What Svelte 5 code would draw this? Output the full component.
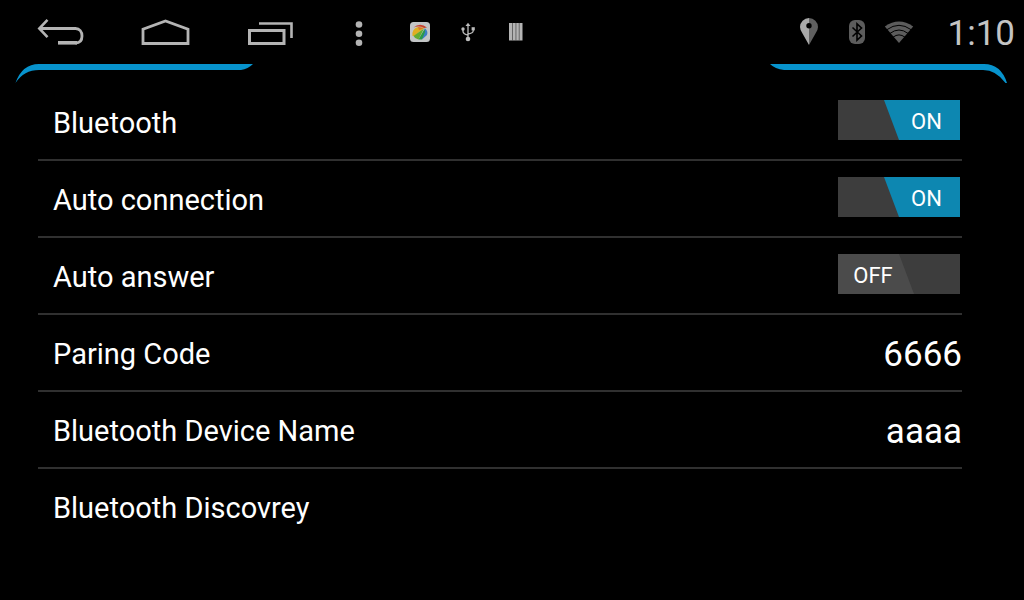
<script>
  let switches = $state([
    { id: 'bluetooth', label: 'Bluetooth', on: true },
    { id: 'auto-connection', label: 'Auto connection', on: true },
    { id: 'auto-answer', label: 'Auto answer', on: false }
  ]);
  let fields = $state([
    { id: 'code', label: 'Paring Code', value: '6666' },
    { id: 'device', label: 'Bluetooth Device Name', value: 'aaaa' }
  ]);
</script>

<div class="screen">
  <header>
    <nav>
      <button class="key" aria-label="Back">
        <svg width="50" height="32" viewBox="0 0 50 32" fill="none" stroke="#b4b4b4">
          <path d="M11.500 3.800 3.300 12.500l8.200 8.700" stroke-width="2.600" />
          <path d="M3.300 12.500h36.200c4 0 6.500 3 6.500 7.500s-2.500 7-6.500 7" stroke-width="2.800" />
          <path d="M41 26.800H22" stroke-width="3.600" />
        </svg>
      </button>
      <button class="key" aria-label="Home">
        <svg width="50" height="32" viewBox="0 0 50 32" fill="none" stroke="#b4b4b4" stroke-width="2.800">
          <path d="M2 27.500V13.300L24.500 4.900 47 13.300v14.200z" />
        </svg>
      </button>
      <button class="key" aria-label="Recent apps">
        <svg width="46" height="32" viewBox="0 0 46 32" fill="none" stroke="#b4b4b4">
          <path d="M1.500 14.600H36v12.800H1.500z" stroke-width="3" />
          <path d="M11 7.500h32.500V22" stroke-width="2.600" />
        </svg>
      </button>
      <button class="more" aria-label="More options">
        <svg width="10" height="32" viewBox="0 0 10 32" fill="#b4b4b4">
          <circle cx="5" cy="8.500" r="3.300" /><circle cx="5" cy="17.700" r="3.300" /><circle cx="5" cy="26.800" r="3.300" />
        </svg>
      </button>
    </nav>
    <div class="notes">
      <svg width="20" height="20" viewBox="0 0 20 20">
        <rect width="20" height="20" rx="3.500" fill="#c3c5c6" />
        <path d="M3.500 5.500Q10 0 17 5.500L14 6Q9 3.500 3.500 5.500z" fill="#c8402c" />
        <path d="M2.500 14Q1.500 7 8 5L14 6 4.500 14z" fill="#dfae22" />
        <path d="M3.500 14 14 6.500 8.500 17.500Q5 17 3.500 14z" fill="#63ac31" />
        <path d="M8.500 17.500 14.500 7Q16.500 10 15 13L12 17.500z" fill="#2b9a47" />
        <path d="M14.500 6Q18.500 9 17 13L12 17.500 15 10z" fill="#3b7fc4" />
        <path d="M8 5 14 6 9 8z" fill="#db7429" />
      </svg>
      <svg width="20" height="20" viewBox="0 0 20 20" fill="none" stroke="#bcbcbc" stroke-width="1.300">
        <path d="M10 3v13M5 7.500v2Q5 11.800 10 13.200M15.200 7V9Q15 11 10 12.200" />
        <path d="M7.500 4 10 .8 12.500 4z" fill="#bcbcbc" stroke="none" />
        <circle cx="10" cy="17" r="2.300" fill="#bcbcbc" stroke="none" />
        <circle cx="5" cy="7" r="1.700" fill="#bcbcbc" stroke="none" />
        <path d="M13.600 5.200h3.200v3.200h-3.200z" fill="#bcbcbc" stroke="none" />
      </svg>
      <svg width="20" height="20" viewBox="0 0 20 20" fill="#b4b4b4">
        <path d="M3 1h13.500v17.500H3z" />
        <path d="M6.300 1h.7v17.500h-.7zM9.600 1h.7v17.500h-.7zM12.800 1h.7v17.500h-.7z" fill="#454545" />
      </svg>
    </div>
    <div class="status">
      <svg width="20" height="28" viewBox="0 0 20 28">
        <path d="M10 27 3.500 15.500Q1 12 1 9A9 9 0 0 1 10 0z" fill="#a9a9a9" />
        <path d="M10 27 16.500 15.500Q19 12 19 9A9 9 0 0 0 10 0z" fill="#606060" />
        <circle cx="10" cy="7.800" r="2.700" fill="#000" />
      </svg>
      <svg width="16" height="26" viewBox="0 0 16 26">
        <rect y="1" width="16" height="24" rx="6" fill="#5c5c5c" />
        <path d="m3.500 8.500 9 8.500-4.500 4.200V4.800L12.500 9l-9 8.500" fill="none" stroke="#000" stroke-width="1.600" />
      </svg>
      <svg class="wifi" width="30" height="24" viewBox="0 0 30 24" fill="#5c5c5c">
        <path d="M.8 6.500Q15-3.500 29.200 6.500L15 23z" />
        <path d="M3 9.600Q15 1 27 9.600M6 13.400Q15 6.600 24 13.400M9 17.200Q15 12.600 21 17.200" fill="none" stroke="#000" stroke-width="1" />
      </svg>
      <time>1:10</time>
    </div>
  </header>

  <div class="trim">
    <svg width="238" height="20" viewBox="0 0 238 20"><path d="M.5 19Q7 0 24 0H238Q233 5 226 6H24Q9 6 .5 19z" fill="#0793cd" /></svg>
    <svg width="238" height="20" viewBox="0 0 238 20"><path d="M237 19Q231 0 214 0H0Q5 5 14 6H213Q226 6 235.500 19z" fill="#0793cd" /></svg>
  </div>

  <main>
    {#each switches as item}
      <div class="row">
        <label for={item.id}>{item.label}</label>
        <span class="toggle" class:on={item.on}>
          <input type="checkbox" role="switch" id={item.id} bind:checked={item.on} />
          <span class="thumb" aria-hidden="true">{item.on ? 'ON' : 'OFF'}</span>
        </span>
      </div>
    {/each}
    {#each fields as field}
      <div class="row">
        <label for={field.id}>{field.label}</label>
        <input class="value" type="text" id={field.id} bind:value={field.value} />
      </div>
    {/each}
    <button class="row discovery">Bluetooth Discovrey</button>
  </main>
</div>

<style>
  :global(body) {
    margin: 0;
    background: #000;
  }
  .screen {
    min-height: 100vh;
    background: #000;
    color: #fff;
    font-family: Roboto, "Liberation Sans", sans-serif;
  }
  button {
    border: 0;
    padding: 0;
    background: none;
    color: inherit;
    font-family: inherit;
    cursor: pointer;
  }
  svg {
    display: block;
  }
  header {
    display: flex;
    align-items: center;
    height: 64px;
    padding: 0 9px 0 8px;
  }
  nav,
  .notes,
  .status {
    display: flex;
    align-items: center;
  }
  .key,
  .more {
    display: grid;
    place-items: center;
    width: 105px;
    height: 64px;
  }
  .more {
    width: 72px;
  }
  .notes {
    gap: 28px;
    padding-left: 15px;
  }
  .status {
    margin-left: auto;
    height: 64px;
  }
  .status svg {
    margin-right: 30px;
  }
  .status svg + svg {
    margin-right: 19px;
  }
  .status svg.wifi {
    margin-right: 34px;
  }
  time {
    color: #c4c4c4;
    font-size: 35px;
    line-height: 40px;
    padding-top: 4px;
  }
  .trim {
    display: flex;
    justify-content: space-between;
    height: 20px;
    padding: 0 16px 0 15px;
  }
  main {
    padding: 0 62px 0 38px;
  }
  .row {
    display: flex;
    align-items: center;
    justify-content: space-between;
    box-sizing: border-box;
    width: 100%;
    height: 77px;
    padding-left: 15px;
    border-bottom: 2px solid #303030;
    font-size: 29px;
    line-height: 40px;
  }
  .row:last-child {
    border-bottom-color: transparent;
  }
  .row label {
    padding-top: 2px;
  }
  .discovery {
    text-align: left;
    padding-top: 2px;
  }
  .toggle {
    display: grid;
    grid-template-rows: 40px;
    width: 122px;
    height: 40px;
    margin: 0 2px 3px 0;
    background: #3d3d3d;
  }
  .toggle input,
  .thumb {
    grid-area: 1 / 1;
  }
  .toggle input {
    appearance: none;
    width: 100%;
    height: 100%;
    margin: 0;
    cursor: pointer;
  }
  .thumb {
    box-sizing: border-box;
    width: 76px;
    height: 40px;
    padding-right: 6px;
    background: #4b4b4b;
    clip-path: polygon(0 0, 61px 0, 100% 100%, 0 100%);
    font-size: 22px;
    line-height: 43px;
    text-align: center;
    pointer-events: none;
  }
  .on .thumb {
    justify-self: end;
    padding: 0 0 0 9px;
    background: #0d87b1;
    clip-path: polygon(0 0, 100% 0, 100% 100%, 15px 100%);
  }
  .value {
    width: 320px;
    padding: 4px 0 0;
    border: 0;
    background: none;
    color: #fff;
    font-family: inherit;
    font-size: 35px;
    line-height: 44px;
    text-align: right;
  }
</style>
